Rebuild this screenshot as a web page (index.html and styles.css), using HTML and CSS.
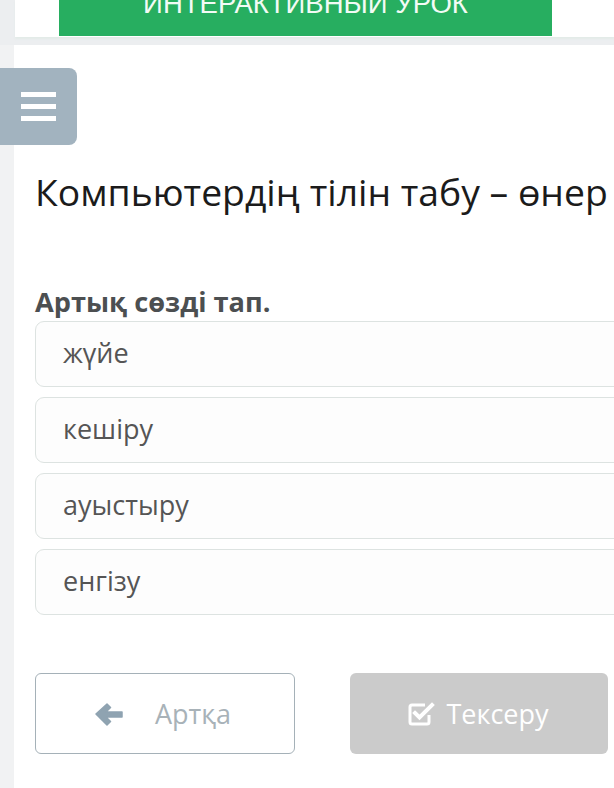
FILE: index.html
```html
<!DOCTYPE html>
<html lang="kk">
<head>
<meta charset="utf-8">
<title>Интерактивный урок</title>
<link rel="stylesheet" href="styles.css">
</head>
<body>
<header class="topbar">
  <div class="topcard">
    <div class="cta"><span class="cta-label">ИНТЕРАКТИВНЫЙ УРОК</span></div>
  </div>
</header>
<main class="main">
  <button class="menu-btn" aria-label="Menu">
    <span class="bar"></span><span class="bar"></span><span class="bar"></span>
  </button>
  <h1 class="title">Компьютердің тілін табу – өнер</h1>
  <section class="quiz">
    <p class="question">Артық сөзді тап.</p>
    <div class="options">
      <div class="option">жүйе</div>
      <div class="option">кешіру</div>
      <div class="option">ауыстыру</div>
      <div class="option">енгізу</div>
    </div>
  </section>
  <div class="actions">
    <button class="btn btn-back">
      <svg class="ico-arrow" viewBox="0 0 28 24" width="28" height="24"><path d="M1 12 L12 2 L15.5 5.5 L11 10 H27 V15 H11 L15.5 19.5 L12 23 Z" fill="#8fa3b1" stroke="#8fa3b1" stroke-width="1.5" stroke-linejoin="round"/></svg>
      <span>Артқа</span>
    </button>
    <button class="btn btn-check">
      <svg class="ico-check" viewBox="0 0 28 26" width="28" height="26"><path d="M22 14 V21 a2 2 0 0 1 -2 2 H5 a2 2 0 0 1 -2 -2 V6 a2 2 0 0 1 2 -2 H18" fill="none" stroke="#fff" stroke-width="3"/><path d="M8 12 L12.5 16.5 L25 4" fill="none" stroke="#fff" stroke-width="4" stroke-linecap="square"/></svg>
      <span>Тексеру</span>
    </button>
  </div>
</main>
</body>
</html>
```
FILE: styles.css
```css
* { box-sizing: border-box; }
html, body { margin: 0; padding: 0; }
body {
  background: #f1f2f3;
  font-family: "Open Sans", "Noto Sans", sans-serif;
  width: 614px;
  height: 788px;
  overflow: hidden;
}
.topbar {
  height: 45px;
  background: #eceef0;
  padding-left: 15px;
}
.topcard {
  height: 37px;
  background: #fff;
  padding-left: 44px;
  box-shadow: 0 2px 2px #e3ebe8;
}
.cta {
  width: 493px;
  height: 36px;
  background: #27ae60;
  overflow: hidden;
  text-align: center;
}
.cta-label {
  display: block;
  font-family: "Liberation Sans", Arial, sans-serif;
  font-size: 27.5px;
  line-height: 28px;
  margin-top: -10px;
  color: #f2fbf5;
}
.main {
  margin-left: 14px;
  background: #fff;
  height: 743px;
  padding-top: 23px;
  padding-left: 21px;
}
.menu-btn {
  display: flex;
  flex-direction: column;
  justify-content: center;
  gap: 7px;
  margin-left: -35px;
  width: 77px;
  height: 77px;
  border: 0;
  border-radius: 0 8px 8px 0;
  background: #a2b3bf;
  padding: 0 0 0 21px;
}
.bar {
  display: block;
  width: 35px;
  height: 5px;
  background: #fff;
}
.title {
  margin: 21px 0 0;
  font-weight: 400;
  font-size: 37.3px;
  line-height: 52px;
  color: #1b1b1b;
  white-space: nowrap;
}
.quiz { margin-top: 69px; }
.question {
  margin: 0 0 5px;
  font-weight: 700;
  font-size: 27.2px;
  line-height: 29px;
  color: #4c4f51;
}
.options {
  display: flex;
  flex-direction: column;
  gap: 10px;
  margin-right: -20px;
}
.option {
  height: 66px;
  border: 1.5px solid #dde3e1;
  border-radius: 9px;
  background: #fdfdfd;
  padding-left: 27px;
  font-size: 27px;
  line-height: 62px;
  color: #555;
}
.actions {
  display: flex;
  gap: 55px;
  margin-top: 58px;
}
.btn {
  display: flex;
  align-items: center;
  justify-content: center;
  height: 81px;
  border-radius: 6px;
  font-family: "Open Sans", sans-serif;
  font-size: 27px;
}
.btn-back {
  width: 260px;
  border: 1.5px solid #a5b1b8;
  background: #fff;
  color: #a8b2b8;
  gap: 32px;
  padding-right: 10px;
}
.btn-check {
  width: 258px;
  border: 0;
  background: #cbcbcb;
  color: #fff;
  gap: 11px;
  padding-right: 8px;
}
```
